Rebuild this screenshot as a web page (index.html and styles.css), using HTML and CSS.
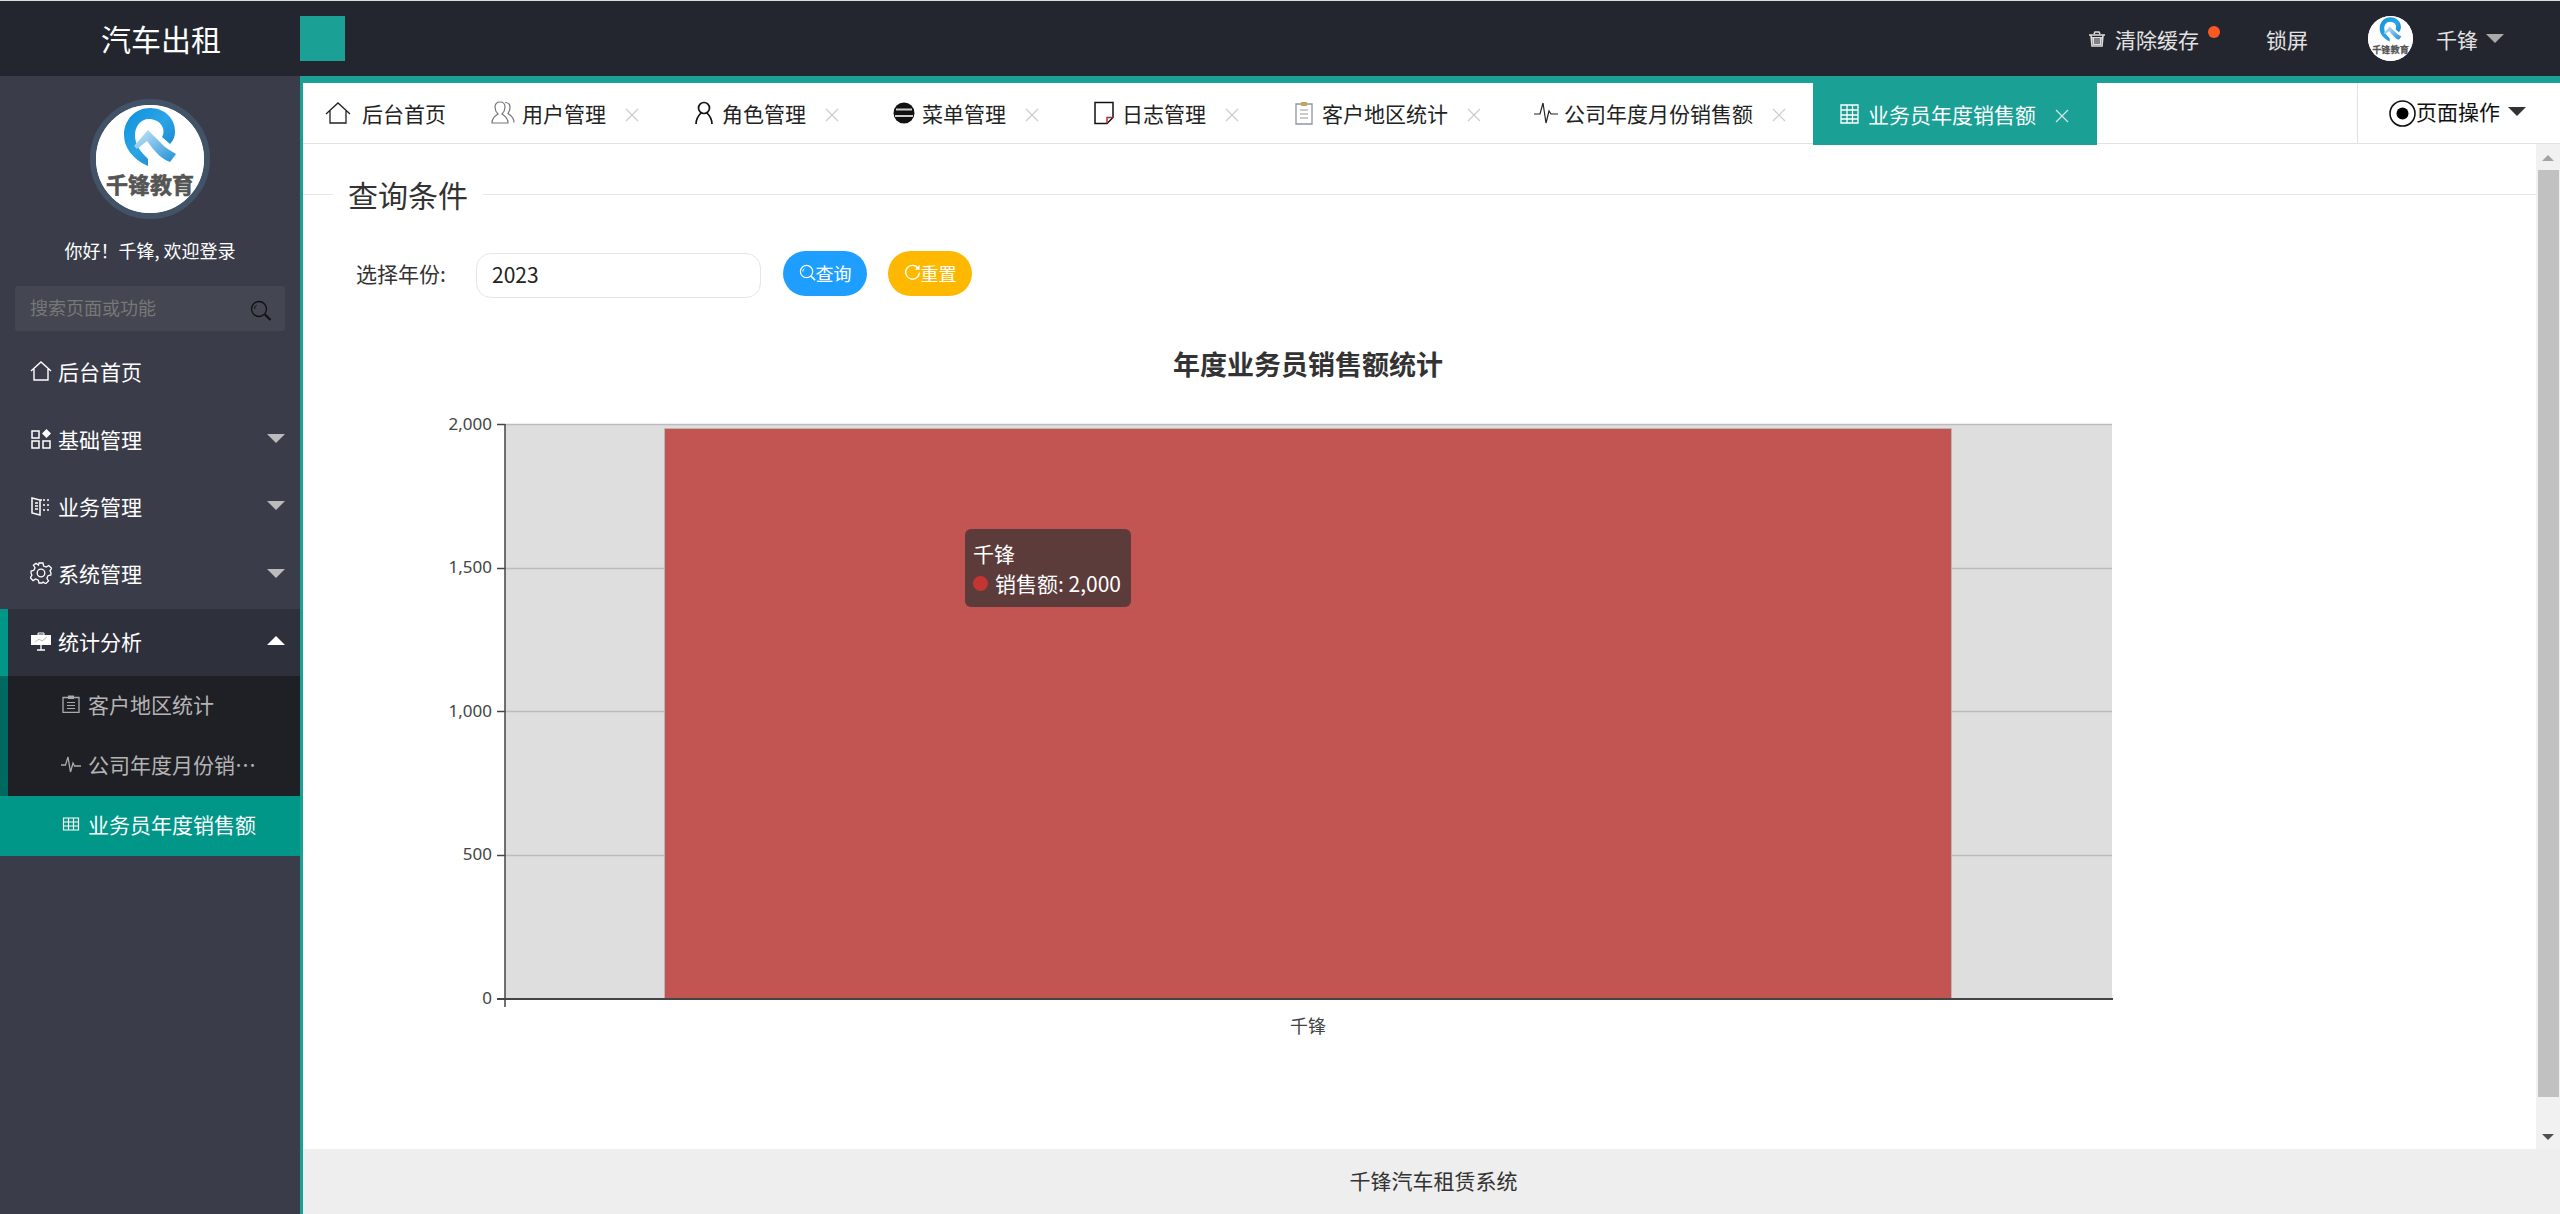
FILE: index.html
```html
<!DOCTYPE html>
<html lang="zh-CN">
<head>
<meta charset="utf-8">
<title>汽车出租</title>
<link rel="stylesheet" href="styles.css">
</head>
<body>
<div class="app">
  <header class="topbar">
    <div class="brand">汽车出租</div>
    <div class="toggle"></div>
    <div class="top-right">
      <div class="top-item clear">
        <svg class="ic-trash" viewBox="0 0 18 16"><path d="M1 4h16M6 3l1-2h4l1 2M3 4l1 11h10l1-11" fill="none" stroke="#ddd" stroke-width="1.6"/><path d="M4 6h10l-1 8H5z" fill="#ddd"/><path d="M7 7v6M9 7v6M11 7v6" stroke="#23262e"/></svg>
        <span>清除缓存</span><i class="dot"></i>
      </div>
      <div class="top-item lock">锁屏</div>
      <svg class="avatar" viewBox="6 6 108 108"><use href="#logo" width="120" height="120"/></svg>
      <div class="top-item user">千锋</div>
      <i class="caret caret-top"></i>
    </div>
  </header>
  <div class="body">
    <aside class="sidebar">
      <svg class="side-logo" viewBox="6 6 108 108">
        <defs>
          <linearGradient id="lg" x1="0" y1="0" x2="1" y2="1"><stop offset="0" stop-color="#0f8fdc"/><stop offset="0.5" stop-color="#2aa5e6"/><stop offset="1" stop-color="#1478c4"/></linearGradient>
          <linearGradient id="lg2" x1="0" y1="0" x2="1" y2="1"><stop offset="0" stop-color="#cfe8f8"/><stop offset="1" stop-color="#1c8fd8"/></linearGradient>
          <clipPath id="logoclip"><circle cx="60" cy="60" r="54"/></clipPath>
          <symbol id="logo" viewBox="0 0 120 120">
            <circle cx="60" cy="60" r="57" fill="#fff"/>
            <g clip-path="url(#logoclip)">
              <path d="M58 67C42 60 34 48 34 36 34 20 46 9 60 9c15 0 25 11 25 23 0 6-2 10-5 13l-8-7c2-3 2-8 0-11-3-5-8-7-13-7-9 0-14 8-14 16 0 10 5 16 13 24z" fill="url(#lg)"/>
              <path d="M58 31l14 14c4 5 10 7 14 10l-6 8c-8-3-14-9-20-17l-3-4-10 8-3-3z" fill="url(#lg2)"/>
              <text class="logo-text" x="60" y="94" text-anchor="middle">千锋教育</text>
            </g>
          </symbol>
        </defs>
        <use href="#logo" width="120" height="120"/>
      </svg>
      <div class="welcome">你好！千锋, 欢迎登录</div>
      <div class="search">
        <input class="search-input" placeholder="搜索页面或功能">
        <svg class="ic-search" viewBox="0 0 22 22"><circle cx="9" cy="9" r="7.5" fill="none" stroke="#111" stroke-width="1.3"/><path d="M4.500 9a4.500 4.500 0 0 1 2-3.700" fill="none" stroke="#111"/><path d="M15 14.500l5.500 5.500" stroke="#111" stroke-width="2.200"/></svg>
      </div>
      <nav class="menu">
        <div class="m-row">
          <svg class="m-ic" viewBox="0 0 22 22"><path d="M1 11L11 2l10 9M4 9v11h14V9" fill="none" stroke="#fff" stroke-width="1.400"/></svg>
          <span>后台首页</span>
        </div>
        <div class="m-row">
          <svg class="m-ic" viewBox="0 0 22 22"><path d="M2 3h7v7H2zM2 13h7v7H2zM13 13h7v7h-7z" fill="none" stroke="#fff" stroke-width="1.500"/><path d="M16.500 1l4.500 4.500-4.500 4.500L12 5.500z" fill="#fff"/></svg>
          <span>基础管理</span><i class="caret caret-side"></i>
        </div>
        <div class="m-row">
          <svg class="m-ic" viewBox="0 0 22 22"><path d="M2 3l8 2v15l-8-2zM10 5h2" fill="none" stroke="#fff" stroke-width="1.500"/><path d="M5 8h3M5 11h3M5 14h3M14 4v2M14 9v2M14 14v2M18 4v2M18 9v2M18 14v2" stroke="#fff" stroke-width="1.500"/></svg>
          <span>业务管理</span><i class="caret caret-side"></i>
        </div>
        <div class="m-row">
          <svg class="m-ic" viewBox="0 0 22 22"><circle cx="11" cy="11" r="3.800" fill="none" stroke="#fff" stroke-width="1.300"/><path d="M9 1h4l.6 3 2.600 1.100 2.600-1.600 2.800 2.800-1.600 2.600L21 11l-.200 2-2.800.700-1.100 2.600 1.600 2.600-2.800 2.800-2.600-1.600L12 21H9l-.7-2.900-2.600-1.100-2.600 1.600L.3 15.800l1.600-2.600L1 11l.1-2 2.800-.700L5 5.700 3.400 3.100 6 1.300l2.500 1.800z" fill="none" stroke="#fff" stroke-width="1.300"/></svg>
          <span>系统管理</span><i class="caret caret-side"></i>
        </div>
        <div class="m-row m-open">
          <svg class="m-ic" viewBox="0 0 22 22"><path d="M8 5V3h6v2z" fill="none" stroke="#fff"/><path d="M1 5h20v10H1z" fill="#fff"/><path d="M5 12l4-3 3 2 5-4" fill="none" stroke="#bbb"/><path d="M11 15v5M7 20h8" stroke="#fff" stroke-width="1.300"/></svg>
          <span>统计分析</span><i class="caret caret-up"></i>
        </div>
        <div class="sub-row">
          <svg class="s-ic" viewBox="0 0 18 18"><path d="M1 2.500h16v15H1z" fill="none" stroke="#aaa" stroke-width="1.300"/><path d="M6 .5h6v3.500H6z" fill="#aaa"/><path d="M5 7.500h8M5 10.500h8M5 13.500h8" stroke="#aaa"/></svg>
          <span class="sub-text">客户地区统计</span>
        </div>
        <div class="sub-row">
          <svg class="s-ic s-wide" viewBox="0 0 20 18"><path d="M0 10h4.500L7 2l2.500 15L12 8l1.500 3H20" fill="none" stroke="#aaa" stroke-width="1.300"/></svg>
          <span class="sub-text">公司年度月份销售额</span>
        </div>
        <div class="sub-row sub-active">
          <svg class="s-ic" viewBox="0 0 18 18"><path d="M1.500 3h15v12h-15zM1.500 7h15M1.500 11h15M6.500 3v12M11.500 3v12" fill="none" stroke="#fff" stroke-width="1.200"/></svg>
          <span class="sub-text">业务员年度销售额</span>
        </div>
      </nav>
    </aside>
    <main class="main">
      <div class="tabs">
        <div class="tab tab-home">
          <svg class="t-ic" viewBox="0 0 26 22"><path d="M1 12L13 1l12 11M5 9v12h16V9" fill="none" stroke="#222" stroke-width="1.300"/></svg>
          <span>后台首页</span>
        </div>
        <div class="tab">
          <svg class="t-ic" viewBox="0 0 26 24"><path d="M1 22c0-6 4-7 6-9-2-2-3-4-3-7 0-3 2-5 5-5s5 2 5 5c0 3-1 5-3 7 2 2 6 3 6 9z" fill="none" stroke="#777" stroke-width="1.200"/><path d="M14 1.500c3 0 5 2 5 5 0 3-1 4-2 6 2 2 6 3 6 9" fill="none" stroke="#777" stroke-width="1.200"/></svg>
          <span>用户管理</span><svg class="t-x" viewBox="0 0 14 14"><path d="M1 1l12 12M13 1L1 13" stroke="#ccc" stroke-width="1.200"/></svg>
        </div>
        <div class="tab">
          <svg class="t-ic" viewBox="0 0 26 24"><circle cx="13" cy="7" r="5.500" fill="none" stroke="#111" stroke-width="1.700"/><path d="M5 23c0-5 3-9 5-11M21 23c0-5-3-9-5-11" fill="none" stroke="#111" stroke-width="1.700"/></svg>
          <span>角色管理</span><svg class="t-x" viewBox="0 0 14 14"><path d="M1 1l12 12M13 1L1 13" stroke="#ccc" stroke-width="1.200"/></svg>
        </div>
        <div class="tab">
          <svg class="t-ic" viewBox="0 0 26 24"><circle cx="13" cy="12" r="10.500" fill="#111"/><path d="M5 8.500h16M4 15h18" stroke="#ccc" stroke-width="2"/></svg>
          <span>菜单管理</span><svg class="t-x" viewBox="0 0 14 14"><path d="M1 1l12 12M13 1L1 13" stroke="#ccc" stroke-width="1.200"/></svg>
        </div>
        <div class="tab">
          <svg class="t-ic" viewBox="0 0 26 24"><path d="M4 1.500h18v15l-6 6H4z" fill="none" stroke="#111" stroke-width="1.500"/><path d="M16 22.500v-6h6" fill="none" stroke="#a33" stroke-width="1.500"/></svg>
          <span>日志管理</span><svg class="t-x" viewBox="0 0 14 14"><path d="M1 1l12 12M13 1L1 13" stroke="#ccc" stroke-width="1.200"/></svg>
        </div>
        <div class="tab">
          <svg class="t-ic" viewBox="0 0 26 24"><path d="M5 3h16v20H5z" fill="none" stroke="#8a96a3" stroke-width="1.300"/><path d="M10 1h6v4h-6z" fill="#c8a060"/><path d="M9 9h8M9 13h8M9 17h8" stroke="#999"/></svg>
          <span>客户地区统计</span><svg class="t-x" viewBox="0 0 14 14"><path d="M1 1l12 12M13 1L1 13" stroke="#ccc" stroke-width="1.200"/></svg>
        </div>
        <div class="tab tab-tight">
          <svg class="t-ic" viewBox="0 0 26 24"><path d="M1 13h6l3-11 3 20 3-12 2 3h7" fill="none" stroke="#222" stroke-width="1.200"/></svg>
          <span>公司年度月份销售额</span><svg class="t-x" viewBox="0 0 14 14"><path d="M1 1l12 12M13 1L1 13" stroke="#ccc" stroke-width="1.200"/></svg>
        </div>
        <div class="tab tab-active">
          <svg class="t-ic" viewBox="0 0 26 24"><path d="M4 3h17v18H4zM4 8h17M4 13h17M4 17h17M10 3v18M15.500 3v18" fill="none" stroke="#fff" stroke-width="1.300"/></svg>
          <span>业务员年度销售额</span><svg class="t-x" viewBox="0 0 14 14"><path d="M1 1l12 12M13 1L1 13" stroke="#d5e8e6" stroke-width="1.200"/></svg>
        </div>
        <div class="page-ops">
          <svg class="ops-ic" viewBox="0 0 27 27"><circle cx="13.500" cy="13.500" r="12.500" fill="none" stroke="#111" stroke-width="1.600"/><circle cx="13.500" cy="13.500" r="6" fill="#000"/></svg>
          <span>页面操作</span><i class="caret caret-ops"></i>
        </div>
      </div>
      <div class="content-row">
        <div class="content">
          <fieldset class="query">
            <legend>查询条件</legend>
            <div class="form-row">
              <label class="f-label">选择年份:</label>
              <input class="f-input" value="2023">
              <button class="btn btn-blue"><svg class="b-ic" viewBox="0 0 18 18"><circle cx="8" cy="8" r="6.500" fill="none" stroke="#fff" stroke-width="1.300"/><path d="M4 8a4 4 0 0 1 1.800-3.200" fill="none" stroke="#fff"/><path d="M12.500 12.500l4.500 4.500" stroke="#fff" stroke-width="1.800"/></svg>查询</button>
              <button class="btn btn-yellow"><svg class="b-ic" viewBox="0 0 18 18"><path d="M15 4.500A7.300 7.300 0 1 0 16.300 9" fill="none" stroke="#fff" stroke-width="1.400"/><path d="M16.500 1v5h-5z" fill="#fff"/></svg>重置</button>
            </div>
          </fieldset>
          <div class="chart">
            <svg class="chart-svg" viewBox="303 340 2233 720">
              <text class="c-title" x="1308" y="375" text-anchor="middle">年度业务员销售额统计</text>
              <rect x="505" y="424" width="1607" height="575" fill="#dedede"/>
              <path d="M505 424.500H2112M505 568.500H2112M505 711.500H2112M505 855.500H2112" stroke="#bcbcbc" stroke-width="1.500"/>
              <rect x="664.500" y="428.500" width="1287" height="570.500" fill="#c25552" stroke="#bdb5b5"/>
              <path d="M505 424V1007M497 424.500H505M497 568.500H505M497 711.500H505M497 855.500H505M497 999H505" stroke="#444" stroke-width="1.500" fill="none"/>
              <path d="M497 999H2113" stroke="#444" stroke-width="2"/>
              <g class="c-axis">
                <text x="492" y="430" text-anchor="end">2,000</text>
                <text x="492" y="573" text-anchor="end">1,500</text>
                <text x="492" y="717" text-anchor="end">1,000</text>
                <text x="492" y="860" text-anchor="end">500</text>
                <text x="492" y="1004" text-anchor="end">0</text>
              </g>
              <text class="c-cat" x="1308" y="1033" text-anchor="middle">千锋</text>
            </svg>
            <div class="tooltip">
              <div>千锋</div>
              <div class="tip-row"><i class="tip-dot"></i>销售额: 2,000</div>
            </div>
          </div>
        </div>
        <div class="scrollbar">
          <i class="sb-up"></i>
          <div class="sb-thumb"></div>
          <i class="sb-down"></i>
        </div>
      </div>
      <footer class="footer">千锋汽车租赁系统</footer>
    </main>
  </div>
</div>
</body>
</html>
```
FILE: styles.css
```css
* { box-sizing: border-box; }
html, body { margin: 0; height: 100%; overflow: hidden; }
body { font-family: "Noto Sans CJK SC", "Noto Sans", sans-serif; font-size: 21px; color: #222; background: #fff; }
i { display: block; }
.app { height: 1214px; display: flex; flex-direction: column; border-top: 1px solid #dcdcdc; }

.topbar { height: 75px; flex: none; display: flex; align-items: flex-start; background: #23262e; }
.brand { width: 300px; padding-left: 101px; font-size: 30px; line-height: 75px; color: #fff; }
.toggle { width: 45px; height: 45px; margin-top: 15px; background: #1aa094; }
.top-right { margin-left: auto; height: 75px; display: flex; align-items: center; padding-right: 56px; }
.top-item { color: #e2e2e2; line-height: 30px; }
.clear { display: flex; align-items: center; }
.ic-trash { width: 18px; height: 16px; margin-right: 9px; }
.dot { width: 12px; height: 12px; border-radius: 50%; background: #ff5722; margin: -14px 0 0 9px; }
.lock { margin-left: 46px; }
.avatar { width: 45px; height: 45px; margin-left: 60px; border-radius: 50%; background: #fff; }
.user { margin-left: 23px; }
.caret { width: 0; height: 0; border-style: solid; }
.caret-top { margin-left: 8px; border-width: 9px 9px 0; border-color: #aaa transparent transparent; }

.body { flex: 1; display: flex; min-height: 0; }
.sidebar { width: 300px; flex: none; background: #3a3d49; padding-top: 23px; }
.side-logo { display: block; width: 120px; height: 120px; margin: 0 auto; border: 6px solid #425368; border-radius: 50%; background: #fff; }
.logo-text { font-family: "Noto Sans CJK SC", sans-serif; font-weight: 700; font-size: 22px; fill: #555; stroke: #555; stroke-width: 0.6px; }
.welcome { margin-top: 17px; text-align: center; font-size: 18px; line-height: 28px; color: #fff; }
.search { position: relative; height: 45px; margin: 22px 15px 8px; background: #444751; border-radius: 3px; }
.search-input { width: 100%; height: 100%; padding: 0 50px 3px 15px; border: 0; outline: 0; background: transparent; font: inherit; font-size: 18px; color: #ddd; }
.search-input::placeholder { color: #777; }
.ic-search { position: absolute; right: 13px; top: 14px; width: 22px; height: 22px; }

.m-row { height: 67.4px; display: flex; align-items: center; padding: 0 0 3px 30px; color: #fff; }
.m-ic { width: 22px; height: 22px; margin-right: 6px; flex: none; }
.caret-side { margin-left: auto; margin-right: 15px; border-width: 9px 9px 0; border-color: #bbb transparent transparent; }
.caret-up { margin-left: auto; margin-right: 15px; border-width: 0 9px 9px; border-color: transparent transparent #fff; }
.m-open { background: #2e303b; border-left: 8px solid #009688; padding-left: 22px; }
.sub-row { height: 60px; display: flex; align-items: center; padding: 0 0 3px 54px; color: #b4b4b4; background: #1f2026; border-left: 8px solid #00695f; }
.s-ic { width: 18px; height: 18px; margin-right: 8px; flex: none; }
.s-wide { width: 20px; margin-left: -1px; margin-right: 7px; }
.sub-text { width: 168px; overflow: hidden; white-space: nowrap; text-overflow: ellipsis; }
.sub-active { background: #009688; border-left-color: #009688; color: #fff; }
.sub-active .sub-text { width: auto; }

.main { flex: 1; min-width: 0; display: flex; flex-direction: column; border-left: 3px solid #1aa094; border-top: 7px solid #1aa094; }
.tabs { height: 61px; flex: none; display: flex; align-items: stretch; border-bottom: 1px solid #e2e2e2; background: #fff; }
.tab { display: flex; align-items: center; height: 60px; padding: 0 28px 0 24px; flex: none; color: #222; }
.t-ic { width: 26px; height: 24px; margin-right: 5px; flex: none; }
.t-x { width: 14px; height: 14px; margin-left: 19px; margin-top: 3px; flex: none; }
.tab-home { padding: 0 21px 0 22px; }
.tab-home .t-ic { margin-right: 11px; }
.tab-tight { padding-right: 27px; }
.tab-active { height: 62px; background: #1aa094; color: #fff; }
.page-ops { margin-left: auto; width: 203px; height: 60px; display: flex; align-items: center; padding: 0 0 4px 31px; border-left: 1px solid #e2e2e2; color: #111; }
.ops-ic { width: 27px; height: 27px; margin-top: 4px; flex: none; }
.caret-ops { margin-left: 8px; border-width: 9px 9px 0; border-color: #333 transparent transparent; }

.content-row { flex: 1; min-height: 0; display: flex; }
.content { flex: 1; min-width: 0; padding-top: 28px; overflow: hidden; }
.query { margin: 0; padding: 0; border: 0; border-top: 1px solid #e6e6e6; }
.query legend { margin-left: 30px; padding: 0 15px; font-size: 30px; line-height: 45px; color: #333; }
.form-row { display: flex; align-items: flex-start; padding: 34px 0 0 53px; }
.f-label { width: 120px; line-height: 45px; color: #333; }
.f-input { width: 285px; height: 45px; margin-top: 2px; padding: 0 15px 3px; border: 1px solid #e6e6e6; border-radius: 15px; outline: 0; font: inherit; color: #222; background: #fff; }
.btn { width: 84px; height: 45px; margin-left: 22px; padding: 0 0 2px; border: 0; border-radius: 23px; display: flex; align-items: center; justify-content: center; font: inherit; font-size: 18px; color: #fff; }
.btn-yellow { margin-left: 21px; }
.btn-blue { background: #1e9fff; }
.btn-yellow { background: #ffb800; }
.b-ic { width: 17px; height: 17px; flex: none; }

.chart { position: relative; margin-top: 42px; height: 720px; }
.chart-svg { display: block; width: 2233px; height: 720px; }
.c-title { font-family: "Noto Sans CJK SC", sans-serif; font-size: 27px; font-weight: 700; fill: #333; }
.c-axis text { font-family: "Noto Sans", sans-serif; font-size: 17px; fill: #444; }
.c-cat { font-family: "Noto Sans CJK SC", sans-serif; font-size: 18px; fill: #444; }
.tooltip { position: absolute; left: 662px; top: 189px; width: 166px; height: 78px; padding: 9px 8px; border-radius: 6px; background: #5c3b3b; color: #fff; font-size: 21px; line-height: 30px; white-space: nowrap; }
.tip-row { display: flex; align-items: center; }
.tip-dot { width: 15px; height: 15px; margin-right: 7px; border-radius: 50%; background: #c23531; flex: none; }

.scrollbar { width: 24px; flex: none; display: flex; flex-direction: column; align-items: center; background: #f1f1f1; padding-top: 11px; }
.sb-up { width: 0; height: 0; border-style: solid; border-width: 0 6px 6px; border-color: transparent transparent #a3a3a3; }
.sb-thumb { width: 21px; height: 927px; margin: 9px 0 0; background: #c1c1c1; }
.sb-down { width: 0; height: 0; margin-top: 37px; border-style: solid; border-width: 6px 6px 0; border-color: #505050 transparent transparent; }

.footer { height: 65px; flex: none; background: #eee; text-align: center; line-height: 63px; padding-left: 4px; color: #333; }
```
